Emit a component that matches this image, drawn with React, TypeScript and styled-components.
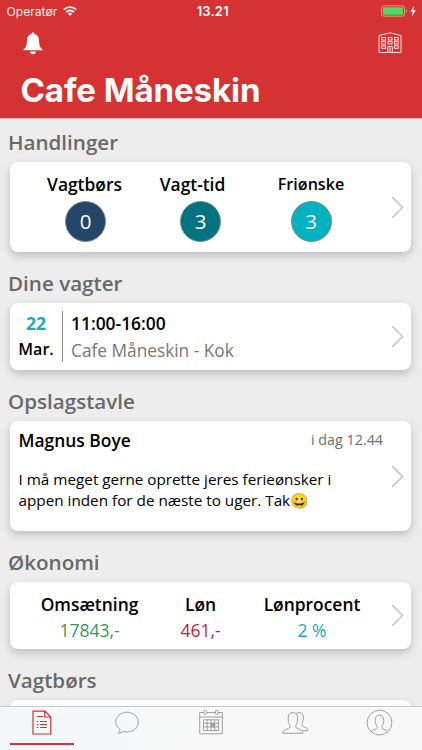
import React from "react";
import styled, { createGlobalStyle } from "styled-components";

const RED = "#d43233";

const GlobalStyle = createGlobalStyle`
  * { box-sizing: border-box; }
  body { margin: 0; background: #ededed; font-family: "Open Sans", sans-serif; color: #000; }
`;

const Screen = styled.div`
  display: flex;
  flex-direction: column;
  width: 422px;
  height: 750px;
  overflow: hidden;
  background: #ededed;
`;

const Header = styled.header`
  flex: none;
  height: 119px;
  background: ${RED};
  border-bottom: 1px solid #dfb4b4;
  color: #fff;
  font-family: Inter, sans-serif;
`;

const StatusBar = styled.div`
  display: grid;
  grid-template-columns: 1fr auto 1fr;
  align-items: center;
  height: 22px;
  padding: 0 5px 0 6.5px;
  font-size: 12.1px;
`;

const Carrier = styled.div`
  display: flex;
  align-items: center;
  gap: 6px;
  opacity: 0.93;
`;

const Clock = styled.div`
  font-size: 13px;
  font-weight: 600;
  letter-spacing: 0.2px;
  padding-left: 2px;
`;

const Power = styled.div`
  display: flex;
  justify-content: flex-end;
  align-items: center;
`;

const NavBar = styled.div`
  display: flex;
  justify-content: space-between;
  align-items: flex-start;
  height: 49px;
  padding: 10px 20px 0 23px;
`;

const Title = styled.h1`
  margin: 0;
  padding-left: 20.5px;
  font-size: 33.1px;
  line-height: 38px;
  font-weight: 650;
  letter-spacing: -0.1px;
  white-space: nowrap;
`;

const Feed = styled.main`
  flex: 1;
  min-height: 0;
  overflow: hidden;
  margin-top: -1px;
  padding: 0 11px 0 10px;
`;

const Heading = styled.h2`
  height: 44px;
  margin: 0 0 0 -2px;
  padding-top: 10px;
  font-size: 20.6px;
  line-height: 28px;
  font-weight: 550;
  color: #696969;
`;

const Card = styled.section<{ $height: number }>`
  display: flex;
  height: ${(p) => p.$height}px;
  margin-bottom: 7px;
  padding-right: 7px;
  border-radius: 8px;
  background: #fff;
  box-shadow: 0 4px 8px rgba(0, 0, 0, 0.2);
`;

const CardBody = styled.div`
  flex: 1;
  min-width: 0;
  display: flex;
`;

const ChevronSlot = styled.div`
  display: flex;
  align-items: center;
`;

const Column = styled.div<{ $width: number; $shift?: number }>`
  display: flex;
  flex-direction: column;
  align-items: center;
  width: ${(p) => p.$width}px;
  margin-left: ${(p) => p.$shift ?? 0}px;
  padding-top: 10px;
`;

const Label = styled.div<{ $size?: number; $nudge?: number }>`
  font-size: ${(p) => p.$size ?? 17.4}px;
  line-height: 24px;
  font-weight: 550;
  white-space: nowrap;
  margin-left: ${(p) => p.$nudge ?? 0}px;
`;

const Count = styled.div<{ $color: string }>`
  display: flex;
  align-items: center;
  justify-content: center;
  width: 41px;
  height: 41px;
  margin-top: 4.5px;
  border: 1px solid #7f8b8d;
  border-radius: 50%;
  background: ${(p) => p.$color};
  color: #fff;
  font-size: 20.5px;
`;

const Value = styled.div<{ $color: string }>`
  margin-top: 3px;
  font-size: 17.5px;
  line-height: 23px;
  color: ${(p) => p.$color};
`;

const ShiftDate = styled.div`
  display: flex;
  flex-direction: column;
  align-items: center;
  width: 53px;
  height: 51px;
  margin-top: 8px;
  border-right: 1.5px solid #8b8b8b;
  font-weight: 600;
`;

const Day = styled.div`
  font-size: 17.6px;
  line-height: 24px;
  font-weight: 700;
  color: #14adbb;
`;

const Month = styled.div`
  margin-top: 2px;
  font-size: 16.1px;
  line-height: 24px;
`;

const ShiftInfo = styled.div`
  padding: 8px 0 0 8px;
`;

const Hours = styled.div`
  font-size: 17.4px;
  line-height: 24px;
  font-weight: 550;
`;

const Place = styled.div`
  margin-top: 4px;
  font-size: 17.3px;
  line-height: 24px;
  color: #777;
`;

const Post = styled.article`
  flex: 1;
  padding: 7px 0 0 8.5px;
`;

const PostHead = styled.div`
  display: flex;
  justify-content: space-between;
  align-items: flex-start;
  padding-right: 8px;
`;

const Author = styled.div`
  font-size: 17.4px;
  line-height: 24px;
  font-weight: 550;
`;

const Time = styled.div`
  font-size: 14.3px;
  line-height: 23px;
  color: #6c6c6c;
`;

const Message = styled.p`
  margin: 17px 0 0;
  font-size: 15.27px;
  line-height: 20.7px;
  white-space: nowrap;
`;

const Emoji = styled.span`
  font-size: 15px;
`;

const TabBar = styled.nav`
  flex: none;
  display: grid;
  grid-template-columns: repeat(5, 1fr);
  height: 44px;
  background: linear-gradient(90deg, #f3f7f8, #f8f8f8 45%);
  border-top: 1px solid #c9c9c9;
`;

const Tab = styled.div<{ $active?: boolean }>`
  display: flex;
  flex-direction: column;
  align-items: center;
  color: ${(p) => (p.$active ? RED : "#a0a0a0")};
  &::after {
    content: "";
    width: 64px;
    height: 2px;
    margin-top: 5px;
    background: ${(p) => (p.$active ? RED : "transparent")};
  }
`;

const Stroke = styled.svg`
  display: block;
  flex: none;
  fill: none;
  stroke: currentColor;
  stroke-width: 1;
  overflow: visible;
`;

const Wifi = () => (
  <svg width="14" height="10" viewBox="0 0 14 10" fill="none" stroke="#fff" strokeWidth="1.9">
    <path d="M.8 3.7a8.8 8.8 0 0 1 12.4 0M3 6.1a5.7 5.7 0 0 1 8 0" />
    <path d="M7 9.9 4.7 7.6a3.3 3.3 0 0 1 4.6 0z" fill="#fff" stroke="none" />
  </svg>
);

const Battery = () => (
  <svg width="36" height="12" viewBox="0 0 36 12">
    <rect x=".5" y=".8" width="23" height="10.4" rx="2.3" fill="none" stroke="#e9a060" />
    <rect x="2" y="2.3" width="20" height="7.4" rx="1" fill="#4cd964" />
    <path d="M25 4.2c1.3.5 1.3 3.1 0 3.6z" fill="#eba09f" />
    <path d="M33.2.8 29.3 6.7h2.5l-1 4.7 4.1-6.1h-2.6z" fill="#fff" />
  </svg>
);

const Bell = () => (
  <svg width="20" height="23" viewBox="0 0 20 23" fill="#fff">
    <path d="M10 .4c1 0 1.5.7 1.5 1.7 3 .8 4.4 3 4.5 6.2.2 5 .8 7.3 3.3 9 .5.4.3 1-.3 1H1c-.6 0-.8-.6-.3-1 2.500-1.700 3.100-4 3.300-9C4.100 5.100 5.500 2.900 8.500 2.100 8.500 1.100 9 .4 10 .4zM7 19.500h6c-.2 1.700-1.500 2.700-3 2.700s-2.800-1-3-2.700z" />
  </svg>
);

const Building = () => (
  <Stroke width="24" height="22" viewBox="0 0 24 22" opacity=".85">
    <path d="M1 20.500V3.500L12 .8l11 2.700v17zM9.800 20.500v-6h4.500v6M12 15v5.500" />
    {[3.700, 10.200, 16.500].map((x) =>
      [5.500, 9.500, 13.800].map((y) =>
        x > 10 && x < 11 && y > 13 ? null : <rect key={`${x}-${y}`} x={x} y={y} width="3.800" height="2.500" />
      )
    )}
  </Stroke>
);

const Chevron = () => (
  <ChevronSlot>
    <svg width="13" height="23" viewBox="0 0 13 23" fill="none" stroke="#c7c7cc" strokeWidth="1.700">
      <path d="M1.200 1.200 11.500 11.500 1.200 21.800" />
    </svg>
  </ChevronSlot>
);

const NewsIcon = () => (
  <Stroke width="20" height="31" viewBox="0 0 20 31">
    <path strokeWidth="1.200" d="M1 4.200h12l5.800 5.800v17H1zM12.800 4.200V10h6M5 9.500h6M4.800 14.500h1.500M8 14.500h7M4.800 17.500h1.500M8 17.500h7M4.800 20.500h1.500M8 20.500h7" />
  </Stroke>
);

const ChatIcon = () => (
  <Stroke width="24" height="31" viewBox="0 0 24 31">
    <path d="M4.800 22.200C2.200 20.300.7 17.900.7 15.100.7 9.500 5.600 5.200 12 5.200s11.300 4.300 11.300 9.900S18.400 25 12 25c-1.500 0-2.800-.2-4-.6-1.300 1.200-2.900 2-4.800 2 .9-1 1.600-2.500 1.600-4.200z" />
  </Stroke>
);

const CalendarIcon = () => (
  <Stroke width="24" height="31" viewBox="0 0 24 31">
    <path d="M5 5.500H.7v21.300h22.600V5.500H19M7.500 5.500h9M.7 10h22.600" />
    <rect x="5" y="3.200" width="2.500" height="4.300" rx="1" />
    <rect x="16.500" y="3.200" width="2.500" height="4.300" rx="1" />
    <path d="M4.500 12.800h15v10.700h-15zM4.500 16.300h15M4.500 19.900h15M8.200 12.800v10.700M12 12.800v10.700M15.700 12.800v10.700" />
    <path d="M12 16.300h3.700v3.600H12z" fill="currentColor" />
  </Stroke>
);

const PeopleIcon = () => (
  <Stroke width="27" height="31" viewBox="0 0 27 31">
    <path d="M.8 26.300c0-2.300 1.500-3.400 4-4.200 2.300-.7 3.200-1.600 3.200-3.100 0-1.200-1.800-2.800-1.800-7.600C6.200 7.500 8 5.500 10.900 5.500s4.700 2 4.700 5.900c0 4.800-1.800 6.400-1.800 7.600 0 1.500.9 2.400 3.200 3.100 2.500.8 4 1.900 4 4.200z" />
    <path d="M14 6.900c.8-1 2-1.400 3.300-1.400 2.800 0 4.100 2 4.100 5.500 0 4-1.500 4.900-1.500 6.600 0 1.300.8 2.100 2.800 2.700 2.100.7 3.400 1.500 3.400 3.400h-5.600" />
  </Stroke>
);

const ProfileIcon = () => (
  <Stroke width="26" height="31" viewBox="0 0 26 31">
    <circle cx="12.500" cy="15.600" r="12.400" />
    <path d="M4 24.600c.9-1.300 2.500-1.700 4-2.200 1.700-.6 2.200-1.200 2.200-2.200 0-1.300-2-2.900-2-6.700 0-3.500 1.600-5.500 4.300-5.500s4.300 2 4.300 5.500c0 3.800-2 5.400-2 6.700 0 1 .5 1.600 2.200 2.200 1.500.5 3.100.9 4 2.200" />
  </Stroke>
);

export default function App() {
  return (
    <Screen>
      <GlobalStyle />
      <Header>
        <StatusBar>
          <Carrier>Operatør<Wifi /></Carrier>
          <Clock>13.21</Clock>
          <Power><Battery /></Power>
        </StatusBar>
        <NavBar><Bell /><Building /></NavBar>
        <Title>Cafe Måneskin</Title>
      </Header>

      <Feed>
        <Heading>Handlinger</Heading>
        <Card $height={90}>
          <CardBody>
            <Column $width={80} $shift={35.5}>
              <Label $nudge={-2}>Vagtbørs</Label>
              <Count $color="#234669">0</Count>
            </Column>
            <Column $width={80} $shift={35}>
              <Label $nudge={-16}>Vagt-tid</Label>
              <Count $color="#02737f">3</Count>
            </Column>
            <Column $width={80} $shift={30.5}>
              <Label $size={16.1}>Friønske</Label>
              <Count $color="#02b2c0">3</Count>
            </Column>
          </CardBody>
          <Chevron />
        </Card>

        <Heading>Dine vagter</Heading>
        <Card $height={67}>
          <CardBody>
            <ShiftDate>
              <Day>22</Day>
              <Month>Mar.</Month>
            </ShiftDate>
            <ShiftInfo>
              <Hours>11:00-16:00</Hours>
              <Place>Cafe Måneskin - Kok</Place>
            </ShiftInfo>
          </CardBody>
          <Chevron />
        </Card>

        <Heading>Opslagstavle</Heading>
        <Card $height={110}>
          <Post>
            <PostHead>
              <Author>Magnus Boye</Author>
              <Time>i dag 12.44</Time>
            </PostHead>
            <Message>
              I må meget gerne oprette jeres ferieønsker i<br />
              appen inden for de næste to uger. Tak<Emoji>😀</Emoji>
            </Message>
          </Post>
          <Chevron />
        </Card>

        <Heading>Økonomi</Heading>
        <Card $height={67}>
          <CardBody>
            <Column $width={100} $shift={29.5}>
              <Label>Omsætning</Label>
              <Value $color="#36985f">17843,-</Value>
            </Column>
            <Column $width={60} $shift={31}>
              <Label>Løn</Label>
              <Value $color="#b92635">461,-</Value>
            </Column>
            <Column $width={100} $shift={31.5}>
              <Label>Lønprocent</Label>
              <Value $color="#16acba">2 %</Value>
            </Column>
          </CardBody>
          <Chevron />
        </Card>

        <Heading>Vagtbørs</Heading>
        <Card $height={90} />
      </Feed>

      <TabBar>
        <Tab $active><NewsIcon /></Tab>
        <Tab><ChatIcon /></Tab>
        <Tab><CalendarIcon /></Tab>
        <Tab><PeopleIcon /></Tab>
        <Tab><ProfileIcon /></Tab>
      </TabBar>
    </Screen>
  );
}
